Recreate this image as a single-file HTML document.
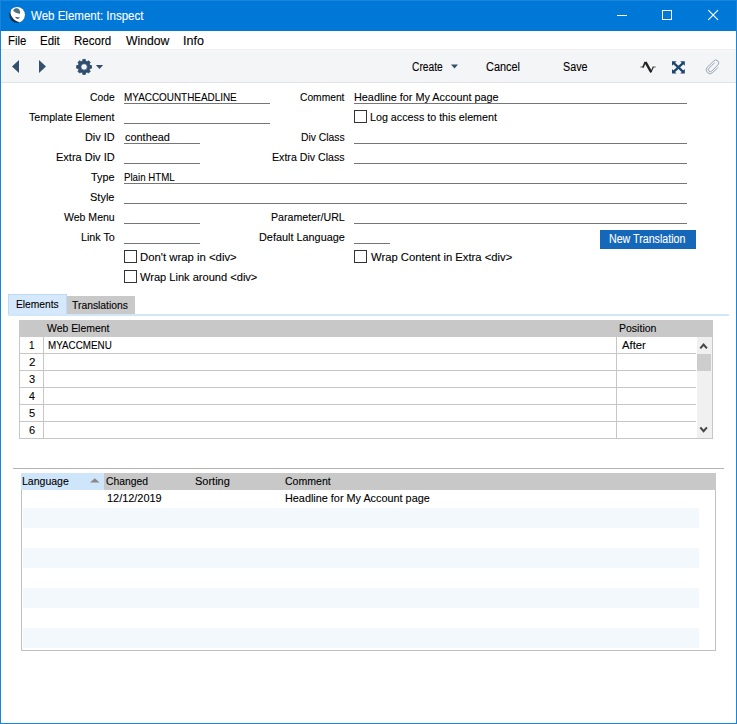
<!DOCTYPE html>
<html><head><meta charset="utf-8"><title>Web Element: Inspect</title>
<style>
html,body{margin:0;padding:0;}
body{width:737px;height:724px;overflow:hidden;background:#fff;font-family:"Liberation Sans", sans-serif;position:relative;}
#win{position:absolute;left:0;top:0;width:737px;height:724px;box-sizing:border-box;border:1px solid #1a84d9;border-top:none;background:#fff;overflow:hidden;}
#c{position:absolute;left:-1px;top:0;width:737px;height:724px;}
#c div{position:absolute;}
.t{position:absolute;white-space:pre;display:block;transform-origin:0 0;-webkit-text-stroke:0.1px currentColor;}
</style></head><body>
<div id="win"><div id="c">
<div style="left:0px;top:0px;width:737px;height:31px;background:#0078d7;"></div>
<div style="left:1px;top:49px;width:735px;height:34px;background:#f4f5f7;"></div>
<div style="left:1px;top:50px;width:735px;height:3px;background:#f6f6f8;"></div>
<div style="left:1px;top:49px;width:735px;height:1px;background:#efeff0;"></div>
<div style="left:1px;top:82px;width:735px;height:1px;background:#e1e3e6;"></div>
<div style="left:0px;top:0px;width:737px;height:1px;background:#1a86dc;"></div>
<div style="left:124px;top:103px;width:146px;height:1px;background:#767676;"></div>
<div style="left:124px;top:123px;width:146px;height:1px;background:#767676;"></div>
<div style="left:124px;top:143px;width:76px;height:1px;background:#767676;"></div>
<div style="left:124px;top:163px;width:76px;height:1px;background:#767676;"></div>
<div style="left:124px;top:183px;width:563px;height:1px;background:#767676;"></div>
<div style="left:124px;top:203px;width:563px;height:1px;background:#767676;"></div>
<div style="left:124px;top:223px;width:76px;height:1px;background:#767676;"></div>
<div style="left:124px;top:243px;width:76px;height:1px;background:#767676;"></div>
<div style="left:354px;top:103px;width:333px;height:1px;background:#767676;"></div>
<div style="left:354px;top:143px;width:333px;height:1px;background:#767676;"></div>
<div style="left:354px;top:163px;width:333px;height:1px;background:#767676;"></div>
<div style="left:354px;top:223px;width:333px;height:1px;background:#767676;"></div>
<div style="left:354px;top:243px;width:36px;height:1px;background:#767676;"></div>
<div style="left:354px;top:110px;width:11px;height:11px;background:#fff;border:1px solid #333;"></div>
<div style="left:124px;top:250px;width:11px;height:11px;background:#fff;border:1px solid #333;"></div>
<div style="left:124px;top:270px;width:11px;height:11px;background:#fff;border:1px solid #333;"></div>
<div style="left:354px;top:250px;width:11px;height:11px;background:#fff;border:1px solid #333;"></div>
<div style="left:600px;top:230px;width:96px;height:19px;background:#1567ba;"></div>
<div style="left:8px;top:294px;width:59px;height:21px;background:#d6e8fb;border:1px solid #bcd9f5;box-sizing:border-box;border-bottom:none;"></div>
<div style="left:8px;top:314px;width:721px;height:2px;background:#d2e6fa;"></div>
<div style="left:67px;top:296px;width:68px;height:18px;background:#c9c9c9;"></div>
<div style="left:19px;top:320px;width:694px;height:119px;background:#fff;border:1px solid #c6c6c6;box-sizing:border-box;border-top:none;"></div>
<div style="left:19px;top:320px;width:694px;height:17px;background:#c8c8c8;"></div>
<div style="left:20px;top:353px;width:676px;height:1px;background:#c6c6c6;"></div>
<div style="left:20px;top:370px;width:676px;height:1px;background:#c6c6c6;"></div>
<div style="left:20px;top:387px;width:676px;height:1px;background:#c6c6c6;"></div>
<div style="left:20px;top:404px;width:676px;height:1px;background:#c6c6c6;"></div>
<div style="left:20px;top:421px;width:676px;height:1px;background:#c6c6c6;"></div>
<div style="left:43px;top:337px;width:1px;height:101px;background:#c6c6c6;"></div>
<div style="left:616px;top:337px;width:1px;height:101px;background:#c6c6c6;"></div>
<div style="left:697px;top:337px;width:15px;height:101px;background:#f0f0f0;"></div>
<div style="left:697px;top:354px;width:14px;height:17px;background:#cdcdcd;"></div>
<div style="left:13px;top:468px;width:711px;height:1px;background:#b4b4b4;"></div>
<div style="left:21px;top:473px;width:695px;height:178px;background:#fff;border:1px solid #c0c0c0;box-sizing:border-box;border-top:none;"></div>
<div style="left:21px;top:473px;width:695px;height:17px;background:#c8c8c8;"></div>
<div style="left:21px;top:473px;width:83px;height:17px;background:#cfe5fa;"></div>
<div style="left:23px;top:508px;width:676px;height:20px;background:#f3f8fd;"></div>
<div style="left:23px;top:548px;width:676px;height:20px;background:#f3f8fd;"></div>
<div style="left:23px;top:588px;width:676px;height:20px;background:#f3f8fd;"></div>
<div style="left:23px;top:628px;width:676px;height:20px;background:#f3f8fd;"></div>
<svg width="737" height="724" viewBox="0 0 737 724" style="position:absolute;left:0;top:0">
<!-- window controls -->
<g stroke="#fff" stroke-width="1" fill="none" shape-rendering="crispEdges">
<line x1="617" y1="15.5" x2="627" y2="15.5"/>
<rect x="662.5" y="10.5" width="9" height="9"/>
</g>
<g stroke="#fff" stroke-width="1.2" fill="none"><path d="M708.3 10.2 L718 19.9 M718 10.2 L708.3 19.9"/></g>
<!-- app icon -->
<defs><radialGradient id="g" cx="0.4" cy="0.35" r="0.75"><stop offset="0" stop-color="#2f5070"/><stop offset="1" stop-color="#0b2037"/></radialGradient>
<clipPath id="cp"><circle cx="17.1" cy="14.85" r="7.9"/></clipPath></defs>
<circle cx="17.1" cy="14.85" r="7.9" fill="url(#g)"/>
<g clip-path="url(#cp)">
<path d="M11.4 8.6 C10.3 11 10.3 13.4 11.1 15.2 C12.1 17.4 13.6 19.3 15.4 20.5 C16.6 21.3 17.9 21.8 19.2 22.1 L19.4 24 L26 24 L26 5 L11.4 5 Z" fill="#fff"/>
<path d="M13.3 9.9 C14.1 8.6 16 7.9 17.4 8.2 C18.9 8.5 19.9 10 20.1 11.6 C20.2 12.6 20.2 13.4 19.8 13.7 C18.6 13.9 16.4 13.2 15 12.3 C14 11.6 13.1 10.7 13.3 9.9 Z" fill="#52707f"/>
<path d="M15 16.7 C16.4 17.5 18.4 17.8 20 17.3 C19.2 19.2 16.2 19.2 15 16.7 Z" fill="#0d2748"/>
</g>
<!-- toolbar arrows -->
<g fill="#34506e">
<path d="M12 66.5 L19 60 L19 73 Z"/>
<path d="M46 66.5 L39 60 L39 73 Z"/>
<path d="M95.8 64.9 L103.2 64.9 L99.5 69 Z"/>
</g>
<path d="M451 64.6 L458 64.6 L454.5 68.6 Z" fill="#34506e"/>
<!-- gear -->
<path fill-rule="evenodd" d="M82.56 61.10 L82.81 59.41 L85.39 59.41 L85.64 61.10 L87.11 61.71 L88.49 60.69 L90.31 62.51 L89.29 63.89 L89.90 65.36 L91.59 65.61 L91.59 68.19 L89.90 68.44 L89.29 69.91 L90.31 71.29 L88.49 73.11 L87.11 72.09 L85.64 72.70 L85.39 74.39 L82.81 74.39 L82.56 72.70 L81.09 72.09 L79.71 73.11 L77.89 71.29 L78.91 69.91 L78.30 68.44 L76.61 68.19 L76.61 65.61 L78.30 65.36 L78.91 63.89 L77.89 62.51 L79.71 60.69 L81.09 61.71 Z M80.85 66.90 A3.25 3.25 0 1 0 87.35 66.90 A3.25 3.25 0 1 0 80.85 66.90 Z" fill="#2f4d6d" stroke="#2f4d6d" stroke-width="0.8" stroke-linejoin="round"/>
<!-- activity icon -->
<g fill="none" stroke-linecap="butt">
<path d="M640.4 67 L644 67 M652.8 67 L655.8 67" stroke="#666" stroke-width="1"/>
<path d="M642.9 67.5 L645.3 61.9" stroke="#2a2a2a" stroke-width="1.7"/>
<path d="M650.9 72.3 L653.3 66.8" stroke="#2a2a2a" stroke-width="1.2"/>
</g>
<path d="M644.3 62.6 L646.6 61.4 L652.0 71.2 L650.3 72.9 Z" fill="#222"/>
<!-- expand icon -->
<g fill="#1e456c">
<path d="M673.3 62.6 L683.5 72.2 M683.5 62.6 L673.3 72.2" stroke="#1e456c" stroke-width="2.3" fill="none"/>
<path d="M672 61.2 L676.6 61.2 L672 65.8 Z"/>
<path d="M684.8 61.2 L680.2 61.2 L684.8 65.8 Z"/>
<path d="M672 73.6 L676.6 73.6 L672 69 Z"/>
<path d="M684.8 73.6 L680.2 73.6 L684.8 69 Z"/>
</g>
<!-- paperclip -->
<path d="M717.93 67.43 L712.78 72.58 A3.8 3.8 0 0 1 707.4 67.2 L713.7 60.9 A2.92 2.92 0 0 1 717.83 65.03 L711.68 71.18 A1.97 1.97 0 0 1 708.9 68.4 L714.7 62.6" stroke="#96a0af" stroke-width="0.95" fill="none"/>
<!-- scroll arrows -->
<g stroke="#454545" stroke-width="2" fill="none">
<path d="M700.3 348.4 L703.6 344.6 L706.9 348.4"/>
<path d="M700.3 427.4 L703.6 431.2 L706.9 427.4"/>
</g>
<!-- sort triangle -->
<path d="M90 482.6 L99.6 482.6 L94.8 478.2 Z" fill="#8a8a8a"/>
</svg>
<span class="t" style="left:30.81px;top:10px;font-size:12px;line-height:12px;height:12px;color:#fff;transform:scaleX(0.9598);">Web Element: Inspect</span>
<span class="t" style="left:8.05px;top:35px;font-size:12px;line-height:12px;height:12px;color:#000;transform:scaleX(0.9515);">File</span>
<span class="t" style="left:40.11px;top:35px;font-size:12px;line-height:12px;height:12px;color:#000;transform:scaleX(0.9576);">Edit</span>
<span class="t" style="left:73.69px;top:35px;font-size:12px;line-height:12px;height:12px;color:#000;transform:scaleX(0.9615);">Record</span>
<span class="t" style="left:125.80px;top:35px;font-size:12px;line-height:12px;height:12px;color:#000;transform:scaleX(1.0162);">Window</span>
<span class="t" style="left:183.07px;top:35px;font-size:12px;line-height:12px;height:12px;color:#000;transform:scaleX(1.0436);">Info</span>
<span class="t" style="left:411.94px;top:61px;font-size:12px;line-height:12px;height:12px;color:#000;transform:scaleX(0.8523);">Create</span>
<span class="t" style="left:486.05px;top:61px;font-size:12px;line-height:12px;height:12px;color:#000;transform:scaleX(0.9106);">Cancel</span>
<span class="t" style="left:562.89px;top:61px;font-size:12px;line-height:12px;height:12px;color:#000;transform:scaleX(0.8964);">Save</span>
<span class="t" style="left:89.91px;top:92px;font-size:11px;line-height:11px;height:11px;color:#000;transform:scaleX(0.9409);">Code</span>
<span class="t" style="left:29.03px;top:112px;font-size:11px;line-height:11px;height:11px;color:#000;transform:scaleX(0.9704);">Template Element</span>
<span class="t" style="left:84.91px;top:132px;font-size:11px;line-height:11px;height:11px;color:#000;transform:scaleX(0.9893);">Div ID</span>
<span class="t" style="left:55.51px;top:152px;font-size:11px;line-height:11px;height:11px;color:#000;transform:scaleX(0.9997);">Extra Div ID</span>
<span class="t" style="left:90.89px;top:172px;font-size:11px;line-height:11px;height:11px;color:#000;transform:scaleX(0.9831);">Type</span>
<span class="t" style="left:89.65px;top:192px;font-size:11px;line-height:11px;height:11px;color:#000;transform:scaleX(0.9996);">Style</span>
<span class="t" style="left:64.24px;top:212px;font-size:11px;line-height:11px;height:11px;color:#000;transform:scaleX(0.9564);">Web Menu</span>
<span class="t" style="left:80.81px;top:232px;font-size:11px;line-height:11px;height:11px;color:#000;transform:scaleX(0.9760);">Link To</span>
<span class="t" style="left:299.62px;top:92px;font-size:11px;line-height:11px;height:11px;color:#000;transform:scaleX(0.9328);">Comment</span>
<span class="t" style="left:300.88px;top:132px;font-size:11px;line-height:11px;height:11px;color:#000;transform:scaleX(0.9389);">Div Class</span>
<span class="t" style="left:271.57px;top:152px;font-size:11px;line-height:11px;height:11px;color:#000;transform:scaleX(0.9661);">Extra Div Class</span>
<span class="t" style="left:270.74px;top:212px;font-size:11px;line-height:11px;height:11px;color:#000;transform:scaleX(0.9655);">Parameter/URL</span>
<span class="t" style="left:258.82px;top:232px;font-size:11px;line-height:11px;height:11px;color:#000;transform:scaleX(0.9886);">Default Language</span>
<span class="t" style="left:124.14px;top:92px;font-size:11px;line-height:11px;height:11px;color:#000;transform:scaleX(0.9009);">MYACCOUNTHEADLINE</span>
<span class="t" style="left:124.86px;top:132px;font-size:11px;line-height:11px;height:11px;color:#000;transform:scaleX(0.9923);">conthead</span>
<span class="t" style="left:124.16px;top:172px;font-size:11px;line-height:11px;height:11px;color:#000;transform:scaleX(0.8818);">Plain HTML</span>
<span class="t" style="left:354.07px;top:92px;font-size:11px;line-height:11px;height:11px;color:#000;transform:scaleX(0.9856);">Headline for My Account page</span>
<span class="t" style="left:369.50px;top:112px;font-size:11px;line-height:11px;height:11px;color:#000;transform:scaleX(0.9747);">Log access to this element</span>
<span class="t" style="left:139.71px;top:252px;font-size:11px;line-height:11px;height:11px;color:#000;transform:scaleX(1.0309);">Don&#x27;t wrap in &lt;div&gt;</span>
<span class="t" style="left:140.17px;top:272px;font-size:11px;line-height:11px;height:11px;color:#000;transform:scaleX(1.0064);">Wrap Link around &lt;div&gt;</span>
<span class="t" style="left:370.80px;top:252px;font-size:11px;line-height:11px;height:11px;color:#000;transform:scaleX(1.0243);">Wrap Content in Extra &lt;div&gt;</span>
<span class="t" style="left:608.81px;top:233px;font-size:12px;line-height:12px;height:12px;color:#fff;transform:scaleX(0.8880);">New Translation</span>
<span class="t" style="left:15.96px;top:299px;font-size:11px;line-height:11px;height:11px;color:#000;transform:scaleX(0.9313);">Elements</span>
<span class="t" style="left:71.82px;top:300px;font-size:11px;line-height:11px;height:11px;color:#000;transform:scaleX(0.9406);">Translations</span>
<span class="t" style="left:46.93px;top:323px;font-size:11px;line-height:11px;height:11px;color:#000;transform:scaleX(0.9478);">Web Element</span>
<span class="t" style="left:618.79px;top:323px;font-size:11px;line-height:11px;height:11px;color:#000;transform:scaleX(0.9559);">Position</span>
<span class="t" style="left:47.87px;top:340px;font-size:11px;line-height:11px;height:11px;color:#000;transform:scaleX(0.8944);">MYACCMENU</span>
<span class="t" style="left:621.60px;top:340px;font-size:11px;line-height:11px;height:11px;color:#000;transform:scaleX(1.0227);">After</span>
<span class="t" style="left:29.10px;top:340px;font-size:11px;line-height:11px;height:11px;color:#000;transform:scaleX(0.8961);">1</span>
<span class="t" style="left:28.82px;top:357px;font-size:11px;line-height:11px;height:11px;color:#000;transform:scaleX(1.0494);">2</span>
<span class="t" style="left:29.21px;top:374px;font-size:11px;line-height:11px;height:11px;color:#000;transform:scaleX(1.0027);">3</span>
<span class="t" style="left:29.39px;top:391px;font-size:11px;line-height:11px;height:11px;color:#000;transform:scaleX(0.9617);">4</span>
<span class="t" style="left:28.74px;top:408px;font-size:11px;line-height:11px;height:11px;color:#000;transform:scaleX(1.0107);">5</span>
<span class="t" style="left:28.86px;top:425px;font-size:11px;line-height:11px;height:11px;color:#000;transform:scaleX(1.0023);">6</span>
<span class="t" style="left:22.34px;top:476px;font-size:11px;line-height:11px;height:11px;color:#000;transform:scaleX(0.9555);">Language</span>
<span class="t" style="left:105.93px;top:476px;font-size:11px;line-height:11px;height:11px;color:#000;transform:scaleX(0.9414);">Changed</span>
<span class="t" style="left:194.90px;top:476px;font-size:11px;line-height:11px;height:11px;color:#000;transform:scaleX(0.9991);">Sorting</span>
<span class="t" style="left:285.16px;top:476px;font-size:11px;line-height:11px;height:11px;color:#000;transform:scaleX(0.9578);">Comment</span>
<span class="t" style="left:106.81px;top:493px;font-size:11px;line-height:11px;height:11px;color:#000;transform:scaleX(0.9931);">12/12/2019</span>
<span class="t" style="left:284.88px;top:493px;font-size:11px;line-height:11px;height:11px;color:#000;transform:scaleX(0.9862);">Headline for My Account page</span>
</div></div>
</body></html>
